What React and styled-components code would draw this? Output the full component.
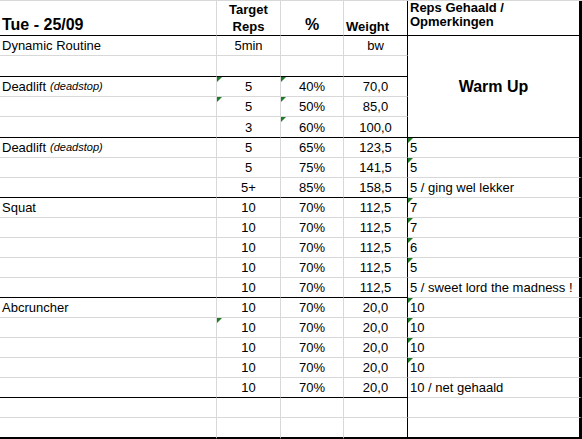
import React from "react";
import styled, { createGlobalStyle, css } from "styled-components";

const GRID = "#d8d8d8";

const rows = [
  { name: "Dynamic Routine", reps: "5min", weight: "bw", h: 20 },
  { h: 21, line: "black" },
  { name: "Deadlift", note: "(deadstop)", reps: "5", pct: "40%", weight: "70,0", flags: ["reps", "pct"], h: 20 },
  { reps: "5", pct: "50%", weight: "85,0", flags: ["reps", "pct"], h: 20 },
  { reps: "3", pct: "60%", weight: "100,0", flags: ["pct"], h: 21, line: "black" },
  { name: "Deadlift", note: "(deadstop)", reps: "5", pct: "65%", weight: "123,5", remark: "5", flags: ["remark"] },
  { reps: "5", pct: "75%", weight: "141,5", remark: "5", flags: ["remark"] },
  { reps: "5+", pct: "85%", weight: "158,5", remark: "5 / ging wel lekker", line: "black" },
  { name: "Squat", reps: "10", pct: "70%", weight: "112,5", remark: "7", flags: ["remark"] },
  { reps: "10", pct: "70%", weight: "112,5", remark: "7", flags: ["remark"] },
  { reps: "10", pct: "70%", weight: "112,5", remark: "6", flags: ["remark"] },
  { reps: "10", pct: "70%", weight: "112,5", remark: "5", flags: ["remark"] },
  { reps: "10", pct: "70%", weight: "112,5", remark: "5 / sweet lord the madness !", line: "black" },
  { name: "Abcruncher", reps: "10", pct: "70%", weight: "20,0", remark: "10", flags: ["remark"] },
  { reps: "10", pct: "70%", weight: "20,0", remark: "10", flags: ["reps", "remark"] },
  { reps: "10", pct: "70%", weight: "20,0", remark: "10", flags: ["remark"] },
  { reps: "10", pct: "70%", weight: "20,0", remark: "10", flags: ["remark"] },
  { reps: "10", pct: "70%", weight: "20,0", remark: "10 / net gehaald", line: "black" },
  {},
  { h: 21, line: "thick", remarkLine: "thick" },
];

const GlobalStyle = createGlobalStyle`
  html, body {
    margin: 0;
    padding: 0;
    overflow: hidden;
    background: #fff;
  }
  body {
    font-family: "Liberation Sans", Arial, sans-serif;
    color: #000;
  }
`;

export default function App() {
  const heights = rows.map((r) => `${r.h || 20}px`).join(" ");
  return (
    <>
      <GlobalStyle />
      <Sheet style={{ gridTemplateRows: `35px ${heights}` }}>
        <HeadCell $size={16}>Tue - 25/09</HeadCell>
        <HeadCell $center $lh={17} $pad={0}>
          Target
          <br />
          Reps
        </HeadCell>
        <HeadCell $center $size={16}>%</HeadCell>
        <HeadCell $edge="black" $lh={15}>Weight</HeadCell>
        <HeadCell $top $edge="thick" $lh={14}>
          Reps Gehaald /
          <br />
          Opmerkingen
        </HeadCell>

        {rows.map((r, i) => {
          const flags = r.flags || [];
          return (
            <React.Fragment key={i}>
              <Cell $line={r.line}>
                {r.name}
                {r.note && <Note>{r.note}</Note>}
              </Cell>
              <Cell $center $line={r.line} $flag={flags.includes("reps")}>
                {r.reps}
              </Cell>
              <Cell $center $line={r.line} $flag={flags.includes("pct")}>
                {r.pct}
              </Cell>
              <Cell $center $line={r.line} $edge="black">
                {r.weight}
              </Cell>
              {i === 0 && <WarmUp>Warm Up</WarmUp>}
              {i >= 5 && (
                <Cell $edge="thick" $line={r.remarkLine} $flag={flags.includes("remark")}>
                  {r.remark}
                </Cell>
              )}
            </React.Fragment>
          );
        })}
      </Sheet>
    </>
  );
}

const Sheet = styled.div`
  display: grid;
  grid-template-columns: 217px 64px 63px 64px 174px;
  width: 582px;
  border-top: 1px solid ${GRID};
  box-sizing: border-box;
`;

const edge = (v) =>
  v === "thick" ? "3px solid #000" : v === "black" ? "1px solid #000" : `1px solid ${GRID}`;

const line = (v) =>
  v === "thick" ? "2px solid #000" : v === "black" ? "1px solid #000" : `1px solid ${GRID}`;

const Cell = styled.div`
  position: relative;
  box-sizing: border-box;
  display: flex;
  align-items: ${(p) => (p.$top ? "flex-start" : "flex-end")};
  justify-content: ${(p) => (p.$center ? "center" : "flex-start")};
  padding: 0 2px 2px;
  border-right: ${(p) => edge(p.$edge)};
  border-bottom: ${(p) => line(p.$line)};
  font-size: 13px;
  line-height: 15px;
  white-space: nowrap;
  overflow: hidden;

  ${(p) =>
    p.$flag &&
    css`
      &::before {
        content: "";
        position: absolute;
        top: 0;
        left: 0;
        border-top: 5px solid #1d7a26;
        border-right: 5px solid transparent;
      }
    `}
`;

const HeadCell = styled(Cell)`
  flex-direction: column;
  justify-content: ${(p) => (p.$top ? "flex-start" : "flex-end")};
  align-items: ${(p) => (p.$center ? "center" : "flex-start")};
  text-align: ${(p) => (p.$center ? "center" : "left")};
  padding-bottom: ${(p) => (p.$pad !== undefined ? p.$pad : 1)}px;
  border-bottom: 1px solid #000;
  font-weight: bold;
  font-size: ${(p) => p.$size || 13}px;
  line-height: ${(p) => p.$lh || 18}px;
  white-space: normal;
`;

const Note = styled.i`
  font-size: 11px;
  margin-left: 4px;
`;

const WarmUp = styled.div`
  grid-row: span 5;
  box-sizing: border-box;
  display: flex;
  align-items: center;
  justify-content: center;
  border-right: 3px solid #000;
  border-bottom: 1px solid #000;
  font-size: 16px;
  font-weight: bold;
`;
